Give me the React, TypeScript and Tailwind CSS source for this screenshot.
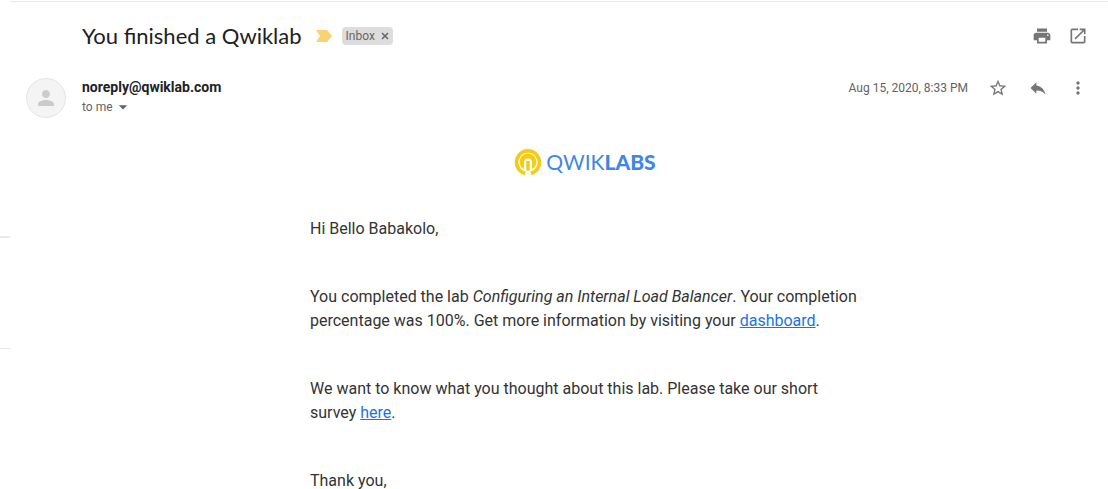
import type { ReactNode } from "react";
import { MdLocalPrintshop, MdOpenInNew, MdStarBorder, MdReply, MdMoreVert, MdPerson, MdArrowDropDown } from "react-icons/md";

function IconButton({ label, children }: { label: string; children: ReactNode }) {
  return (
    <button type="button" aria-label={label} className="flex h-10 w-10 items-center justify-center text-[#757575]">
      {children}
    </button>
  );
}

function Logo() {
  return (
    <div className="flex items-center justify-center gap-1 pt-[30px]">
      <svg viewBox="0 0 28 28" className="h-7 w-7" aria-hidden="true">
        <path d="M11.2 25.4A11.4 11.4 0 1 1 16.8 25.4" fill="none" stroke="#f4cc16" strokeWidth="3.7" />
        <path d="M10 21.2A8.4 8.4 0 1 1 18 21.2V14.6A4 4 0 0 0 10 14.6Z" fill="#f4cc16" />
        <path d="M14 13V22.5" stroke="#f4cc16" strokeWidth="3.6" />
      </svg>
      <span className="font-[Lato,sans-serif] text-[21px] leading-7 text-[#3f86e5]">
        QWIK<strong className="font-black">LABS</strong>
      </span>
    </div>
  );
}

export default function App() {
  return (
    <div className="flex min-h-screen bg-white font-[Roboto,sans-serif] text-[#202124]">
      <aside className="w-[10px] shrink-0">
        <div className="h-[238px] border-b-2 border-[#eaeaea]" />
        <div className="h-[111px] border-b border-[#e5eaf1]" />
      </aside>

      <main className="min-w-0 grow pt-px">
        <div className="border-t border-[#ebebeb] pl-4">
          <header className="flex h-[66px] items-center justify-between pr-5 pl-14 pt-0.5">
            <div className="flex items-center">
              <h1 className="font-[Lato,sans-serif] text-[22px] leading-7">You finished a Qwiklab</h1>
              <svg viewBox="0 0 16 12" className="ml-[14px] h-3 w-4" role="img" aria-label="Important">
                <path d="M0 0H11L16 6L11 12H0L4 6Z" fill="#f7d374" />
              </svg>
              <span className="ml-[10px] flex h-[18px] items-center gap-[6px] rounded bg-[#ddd] px-1 text-[12px] text-[#666]">
                Inbox
                <button type="button" aria-label="Remove label Inbox" className="flex w-2 items-center justify-center">
                  <svg viewBox="0 0 8 8" className="h-2 w-2">
                    <path d="M1 1L7 7M7 1L1 7" stroke="#666" strokeWidth="1.6" />
                  </svg>
                </button>
              </span>
            </div>
            <div className="flex gap-4 text-[#757575]">
              <button type="button" aria-label="Print all"><MdLocalPrintshop size={20} /></button>
              <button type="button" aria-label="Open in new window"><MdOpenInNew size={20} /></button>
            </div>
          </header>

          <div className="flex items-start gap-4 pr-[10px]">
            <div className="mt-[10px] flex h-10 w-10 shrink-0 items-center justify-center rounded-full border border-[#e4e4e4] bg-[#f4f4f4] text-[#cbcbcb]">
              <MdPerson size={24} />
            </div>
            <div className="grow pt-[9px]">
              <p className="text-[14px] leading-5 font-bold">noreply@qwiklab.com</p>
              <button type="button" className="flex items-center text-[12px] leading-5 text-[#5f6368]">
                to me
                <MdArrowDropDown size={20} />
              </button>
            </div>
            <div className="flex items-center">
              <time dateTime="2020-08-15T20:33" className="mr-[10px] text-[12px] text-[#5f6368]">Aug 15, 2020, 8:33 PM</time>
              <IconButton label="Star"><MdStarBorder size={20} /></IconButton>
              <IconButton label="Reply"><MdReply size={20} /></IconButton>
              <IconButton label="More"><MdMoreVert size={20} /></IconButton>
            </div>
          </div>

          <div className="pr-5 pl-14">
            <article className="mx-auto max-w-[550px] text-[16px] leading-6 text-[#333]">
              <Logo />
              <div className="flex flex-col gap-11 pt-[41px]">
                <p>Hi Bello Babakolo,</p>
                <p>
                  You completed the lab <em>Configuring an Internal Load Balancer</em>. Your completion percentage was
                  100%. Get more information by visiting your{" "}
                  <a href="#dashboard" className="text-[#1a73e8] underline">dashboard</a>.
                </p>
                <p>
                  We want to know what you thought about this lab. Please take our short survey{" "}
                  <a href="#survey" className="text-[#1a73e8] underline">here</a>.
                </p>
                <p>Thank you,</p>
              </div>
            </article>
          </div>
        </div>
      </main>
    </div>
  );
}
